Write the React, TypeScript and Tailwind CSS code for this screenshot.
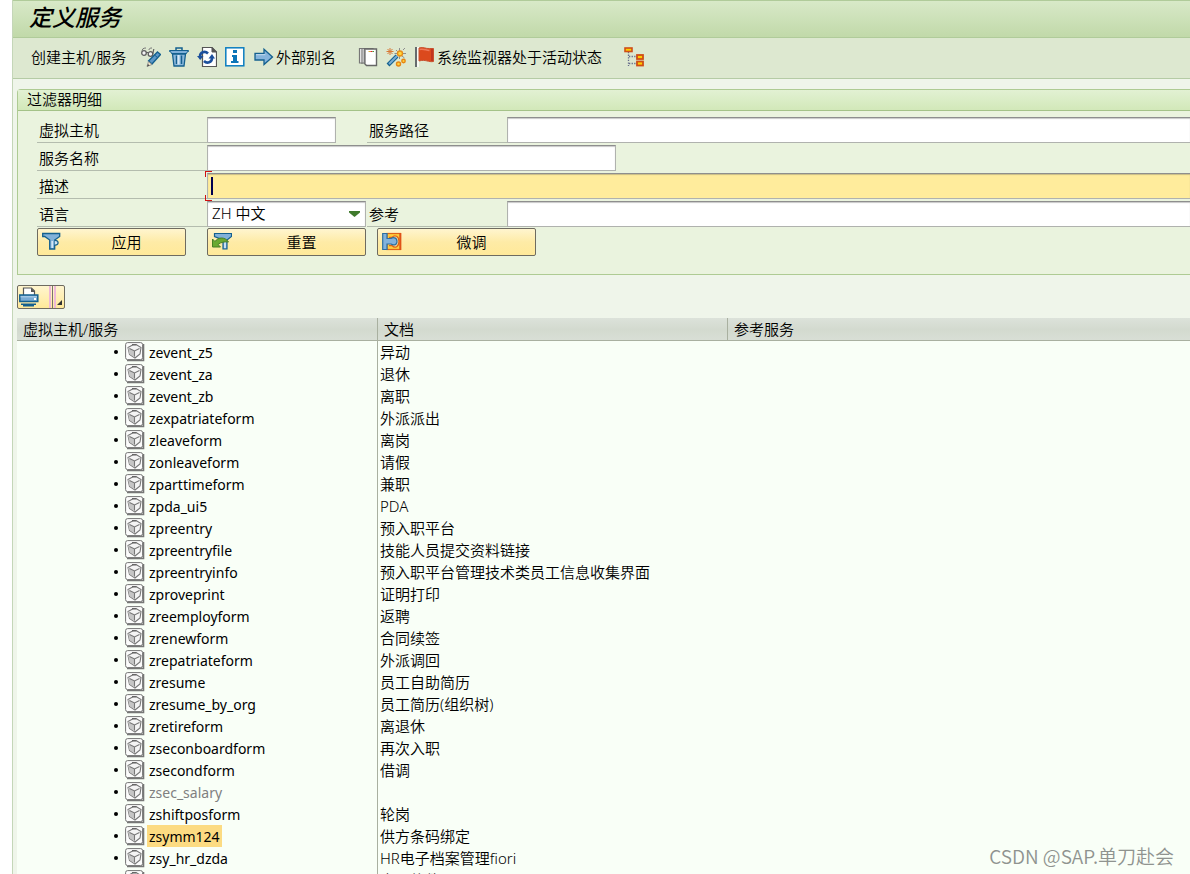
import type { ReactNode } from "react";

type Service = { name: string; doc: string; inactive?: boolean; selected?: boolean };

const services: Service[] = [
  { name: "zevent_z5", doc: "异动" },
  { name: "zevent_za", doc: "退休" },
  { name: "zevent_zb", doc: "离职" },
  { name: "zexpatriateform", doc: "外派派出" },
  { name: "zleaveform", doc: "离岗" },
  { name: "zonleaveform", doc: "请假" },
  { name: "zparttimeform", doc: "兼职" },
  { name: "zpda_ui5", doc: "PDA" },
  { name: "zpreentry", doc: "预入职平台" },
  { name: "zpreentryfile", doc: "技能人员提交资料链接" },
  { name: "zpreentryinfo", doc: "预入职平台管理技术类员工信息收集界面" },
  { name: "zproveprint", doc: "证明打印" },
  { name: "zreemployform", doc: "返聘" },
  { name: "zrenewform", doc: "合同续签" },
  { name: "zrepatriateform", doc: "外派调回" },
  { name: "zresume", doc: "员工自助简历" },
  { name: "zresume_by_org", doc: "员工简历(组织树)" },
  { name: "zretireform", doc: "离退休" },
  { name: "zseconboardform", doc: "再次入职" },
  { name: "zsecondform", doc: "借调" },
  { name: "zsec_salary", doc: "", inactive: true },
  { name: "zshiftposform", doc: "轮岗" },
  { name: "zsymm124", doc: "供方条码绑定", selected: true },
  { name: "zsy_hr_dzda", doc: "HR电子档案管理fiori" },
  { name: "zsy_hr_wx", doc: "志愿软件" },
];

function Icon({ children }: { children: ReactNode }) {
  return (
    <svg className="h-5 w-5 shrink-0" viewBox="0 0 20 20" fill="none" aria-hidden="true">
      {children}
    </svg>
  );
}

function GlassesPencilIcon() {
  return (
    <Icon>
      <path d="M1 5C1 2 2 1 5 1M8 3c0-1.500 1-2 3-2" stroke="#777" strokeWidth="1" />
      <circle cx="3" cy="6" r="2.300" fill="#f4f4f4" stroke="#5f5f5f" strokeWidth="1.300" />
      <circle cx="9.500" cy="7" r="2.300" fill="#f4f4f4" stroke="#5f5f5f" strokeWidth="1.300" />
      <path d="M5 5.500h2.500M11.800 7l1-5" stroke="#5f5f5f" strokeWidth="1.200" />
      <path d="M16.500 5l3 2.500L11 17l-3.500-3z" fill="#5d98c8" stroke="#14608f" strokeWidth="1.400" />
      <path d="M13.500 8l3.500 3" stroke="#14608f" />
      <path d="M7.500 14.500l3.500 3-5 2z" fill="#f0e4c8" stroke="#888" strokeWidth=".8" />
      <path d="M6 19.500l1-2.500 1.500 1.500z" fill="#444" />
    </Icon>
  );
}

function TrashIcon() {
  return (
    <Icon>
      <path d="M7 3V1h6v2" stroke="#14608f" strokeWidth="1.500" />
      <path d="M.5 3.500h19v1h-1l-1 2h-15l-1-2h-1z" fill="#7fb0d9" stroke="#14608f" />
      <path d="M3.500 7h13L15 19H5z" fill="#8cb8dc" stroke="#14608f" strokeWidth="1.300" />
      <path d="M7.500 8.500V17M12.500 8.500V17" stroke="#14608f" strokeWidth="1.500" />
      <path d="M9.500 8v9.500" stroke="#d5e7f5" strokeWidth="2" />
    </Icon>
  );
}

function RefreshPageIcon() {
  return (
    <Icon>
      <path d="M5.500.5H15l4.500 4.500v14.500h-14z" fill="#fff" stroke="#555" strokeWidth="1.200" />
      <path d="M15 .5V5h4.500z" fill="#555" stroke="#555" />
      <path d="M3 9.500C3 5 8 3.500 11 6.500" stroke="#1b4f9c" strokeWidth="2.600" />
      <path d="M0 9h6.500L3.200 13z" fill="#1b4f9c" />
      <path d="M15 11c0 4.500-5 6-8 3" stroke="#1b4f9c" strokeWidth="2.600" />
      <path d="M11.500 11.500H18L15 7z" fill="#1b4f9c" />
    </Icon>
  );
}

function InfoIcon() {
  return (
    <Icon>
      <rect x=".8" y=".8" width="18" height="18" fill="#fff" stroke="#0b7dc0" strokeWidth="1.500" />
      <path d="M8 3h4v3H8zM7 8h5v6h1.500v2H6v-2h2v-4H7z" fill="#0b75b8" />
    </Icon>
  );
}

function ArrowIcon() {
  return (
    <Icon>
      <path d="M1 6.500h9V2.200L18.500 10 10 17.500V13H1z" fill="#86b4dc" stroke="#14608f" strokeWidth="1.300" />
      <path d="M2 7.700h9.300" stroke="#c8dff2" />
    </Icon>
  );
}

function BooksIcon() {
  return (
    <Icon>
      <path d="M1.500 1.500H15V16h-13.500z" fill="#f0f0f0" stroke="#777" strokeWidth="1.200" />
      <path d="M4 2v15" stroke="#777" strokeWidth="1.200" />
      <path d="M6.500 2h12v16.500h-10l-2-2z" fill="#fff" stroke="#666" strokeWidth="1.400" />
      <path d="M6.700 2.500v14" stroke="#777" strokeWidth="1.800" />
      <path d="M10.500 4.500h2" stroke="#ddaa3c" />
      <path d="M12.500 4.500h2" stroke="#e02020" />
      <path d="M14.500 4.500h1.500" stroke="#44a038" />
    </Icon>
  );
}

function WandIcon() {
  return (
    <Icon>
      <path d="M4 1v7M.5 4.500h7M1.500 2l5 5M6.500 2l-5 5" stroke="#d87936" />
      <path d="M2 18L11 9" stroke="#14608f" strokeWidth="4" />
      <path d="M3 17L11 9" stroke="#78acd4" strokeWidth="2" />
      <path d="M13.500 1v3M13.500 9v3M8.500 6.500h3M16 6.500h4M17 3l2-2M10 3l1.500 1.500M16 9l2.500 2" stroke="#8d8d8d" />
      <circle cx="14" cy="6.500" r="2.500" fill="#ffd93c" stroke="#e88e19" strokeWidth="1.400" />
      <circle cx="17.500" cy="14" r="1.700" fill="#ffd23a" stroke="#e68613" strokeWidth="1.400" />
      <circle cx="12.500" cy="17" r="2" fill="#ffd23a" stroke="#e68613" strokeWidth="1.400" />
    </Icon>
  );
}

function FlagIcon() {
  return (
    <Icon>
      <path d="M2 0v20" stroke="#666b6d" strokeWidth="2" />
      <path d="M4 0v20" stroke="#fff" strokeWidth="1.500" />
      <path d="M5 1c5-1.500 6.500 1 10.500 .5H19.500v13c-5 1-8-2.500-14.500-.5z" fill="#db491d" stroke="#c8512f" />
      <path d="M5.500 2.500c5-1 6 1 10 1" stroke="#ee795a" strokeWidth="1.500" />
      <path d="M18 2v12" stroke="#b82e20" strokeWidth="1.500" />
    </Icon>
  );
}

function HierarchyIcon() {
  return (
    <Icon>
      <path d="M4.500 5v14M5 9.500h8M5 16.500h8" stroke="#666b8b" strokeWidth="1.300" strokeDasharray="1.300 1.300" />
      <rect x="1" y="1" width="7" height="3.500" fill="#ffcc00" stroke="#cf4e16" strokeWidth="1.600" />
      <rect x="13" y="8" width="6" height="4" fill="#ffcc00" stroke="#cf4e16" strokeWidth="1.800" />
      <rect x="13" y="14.500" width="6" height="4" fill="#ffcc00" stroke="#cf4e16" strokeWidth="1.800" />
    </Icon>
  );
}

function FilterIcon() {
  return (
    <Icon>
      <path d="M.7 1.500h17v3l-5 3.500v9h-5V8l-5-3.500h-2z" fill="#82b1d9" stroke="#14608f" strokeWidth="1.300" />
      <path d="M10.200 9v7" stroke="#d4e6f4" strokeWidth="1.600" />
      <path d="M12.700 8.500c4.500-.5 4.500 5 0 4.500" fill="#cfe3f2" stroke="#14608f" strokeWidth="1.300" />
    </Icon>
  );
}

function ResetFilterIcon() {
  return (
    <Icon>
      <path d="M2.500 1.500h17v3l-4.500 3.500v9h-4V8L2.500 4.500z" fill="#82b1d9" stroke="#14608f" strokeWidth="1.200" />
      <path d="M13 10v6" stroke="#e0eef8" strokeWidth="1.500" />
      <path d="M.5 7v8h8l-2.500-2.500C9 10 13 9.500 16.500 10 13 4.500 6 5 3 9.500z" fill="#6aaa31" stroke="#477f25" />
    </Icon>
  );
}

function FineTuneIcon() {
  return (
    <Icon>
      <rect x="5" y="1.500" width="13.500" height="16" fill="#ffce3e" stroke="#df6418" strokeWidth="1.200" />
      <path d="M18.300 1v17" stroke="#df5318" strokeWidth="2" />
      <path d="M7 5.500h3c3-3.500 7-1 7 4s-4 7.500-7 4H7" fill="#f6dfa3" stroke="#df6418" strokeWidth="1.300" />
      <path d="M.7 1.500H5v5h4c2-1.500 6-1 6 3s-4 4-6 2.500H5v5.500H.7z" fill="#83b2dc" stroke="#2d6fa0" strokeWidth="1.200" />
    </Icon>
  );
}

function PrinterIcon() {
  return (
    <Icon>
      <path d="M4.500 8V1H12.500L15.500 4v4" fill="#fff" stroke="#555" strokeWidth="1.200" />
      <path d="M12 1v4h4z" fill="#555" />
      <path d="M.8 8h18v6.500H.8z" fill="#79abd5" stroke="#14608f" strokeWidth="1.500" />
      <path d="M1.500 9.800h16.500" stroke="#b5d3eb" />
      <rect x="15" y="11" width="2" height="2" fill="#fff" />
      <path d="M2 16.500h15V18h-2v1.500H4V18H2z" fill="#14608f" />
    </Icon>
  );
}

function ServiceIcon() {
  return (
    <Icon>
      <path d="M2 18.500h16.500V2" stroke="#777" strokeWidth="1.600" />
      <rect x=".6" y=".6" width="17" height="17" rx="2" fill="#fcfcfc" stroke="#737373" />
      <path d="M3 5.500l5-2.800h3.500l4.500 2.800-1 6.500-5 4-5.500-3.500z" fill="#f4f4f4" stroke="#777" strokeWidth="1.100" />
      <path d="M3 5.500L9.500 9v6.500L4.500 12z" fill="#c6c6c6" />
      <path d="M4.500 6.500l5 2.500 5-2.500M9.500 9v5.500" stroke="#777" strokeWidth="1.100" />
      <path d="M7 2.700h4.500" stroke="#666" strokeWidth="1.400" />
    </Icon>
  );
}

const labelStyle = "flex h-[26px] items-center border-b border-[#b4bcae] pl-0.5";
const fieldStyle =
  "h-[26px] min-w-0 border border-[#b0b2ae] border-t-[#8e8e8e] bg-white px-1 shadow-[inset_0_1px_1px_#c8c8c8] outline-none";
const buttonStyle =
  "flex h-7 items-center rounded-xs border border-[#6e6b60] bg-linear-to-b from-[#fff5cf] via-[#feeba6] to-[#ffe999] pl-1";

function ActionButton({ icon, text, className }: { icon: ReactNode; text: string; className: string }) {
  return (
    <button type="button" className={`${buttonStyle} ${className}`}>
      {icon}
      <span className="flex-1 pl-1.5 text-center">{text}</span>
    </button>
  );
}

function Toolbar() {
  return (
    <div role="toolbar" className="flex h-[41px] items-center border-b border-[#b5cba5] bg-[#dde8d0] pb-0.5 pl-[18px]">
      <button type="button" className="w-[110px] text-left">创建主机/服务</button>
      <div className="flex gap-2">
        <button type="button" aria-label="显示/更改"><GlassesPencilIcon /></button>
        <button type="button" aria-label="删除"><TrashIcon /></button>
        <button type="button" aria-label="刷新"><RefreshPageIcon /></button>
        <button type="button" aria-label="信息"><InfoIcon /></button>
      </div>
      <button type="button" className="ml-[9px] flex items-center gap-0.5"><ArrowIcon />外部别名</button>
      <div className="ml-[22px] flex gap-2">
        <button type="button" aria-label="文档"><BooksIcon /></button>
        <button type="button" aria-label="向导"><WandIcon /></button>
        <button type="button" className="flex items-center gap-[3px]"><FlagIcon />系统监视器处于活动状态</button>
      </div>
      <button type="button" aria-label="层次结构" className="ml-[22px]"><HierarchyIcon /></button>
    </div>
  );
}

function FilterPanel() {
  return (
    <section className="ml-1 mt-[10px] rounded-tl-sm border-y border-l border-[#aecb93] bg-[#eaf3de] pb-[18px]">
      <h2 className="flex h-[21px] items-center border-b border-[#a4c288] bg-linear-to-b from-[#e2f1d3] to-[#d2e8b9] pb-0.5 pl-[9px]">
        过滤器明细
      </h2>
      <form className="pl-[19px] pt-1.5" onSubmit={(e) => e.preventDefault()}>
        <div className="flex flex-col gap-0.5">
          <div className="flex">
            <label htmlFor="host" className={`${labelStyle} w-[170px]`}>虚拟主机</label>
            <input id="host" className={`${fieldStyle} w-[129px]`} />
            <label htmlFor="path" className={`${labelStyle} ml-[31px] w-[140px]`}>服务路径</label>
            <input id="path" className={`${fieldStyle} flex-1 border-r-0`} />
          </div>
          <div className="flex">
            <label htmlFor="service" className={`${labelStyle} w-[170px]`}>服务名称</label>
            <input id="service" className={`${fieldStyle} w-[409px]`} />
          </div>
          <div className="flex">
            <label htmlFor="description" className={`${labelStyle} w-[170px]`}>描述</label>
            <div className="relative flex flex-1">
              <input
                id="description"
                className="h-[26px] min-w-0 flex-1 border border-r-0 border-[#b0b2ae] border-t-[#8e8e8e] bg-[#ffec9c] px-1 shadow-[inset_0_1px_1px_#c8bc88] outline-none"
              />
              <span className="absolute -left-0.5 -top-0.5 h-1.5 w-[7px] border-l border-t border-[#d01010]" />
              <span className="absolute -bottom-0.5 -left-0.5 h-1.5 w-[7px] border-b border-l border-[#d01010]" />
              <span className="absolute left-1 top-1 h-[18px] w-0.5 bg-[#000050]" />
            </div>
          </div>
          <div className="flex">
            <label htmlFor="language" className={`${labelStyle} w-[170px]`}>语言</label>
            <div className="relative flex w-[159px]">
              <select id="language" className={`${fieldStyle} flex-1 appearance-none pb-0.5`}>
                <option>ZH 中文</option>
              </select>
              <svg className="pointer-events-none absolute right-1.5 top-2.5 h-1.5 w-[11px]" viewBox="0 0 11 6" aria-hidden="true">
                <path d="M0 0h11v1.500L5.500 6 0 1.500z" fill="#3f7a2c" />
              </svg>
            </div>
            <label htmlFor="reference" className={`${labelStyle} ml-px w-[140px]`}>参考</label>
            <input id="reference" className={`${fieldStyle} flex-1 border-r-0`} />
          </div>
        </div>
        <div className="mt-px flex">
          <ActionButton icon={<FilterIcon />} text="应用" className="w-[149px]" />
          <ActionButton icon={<ResetFilterIcon />} text="重置" className="ml-[21px] w-[159px]" />
          <ActionButton icon={<FineTuneIcon />} text="微调" className="ml-[11px] w-[159px]" />
        </div>
      </form>
    </section>
  );
}

function ServiceTable() {
  return (
    <table className="w-full table-fixed border-separate border-spacing-0">
      <thead>
        <tr className="h-[23px] bg-linear-to-b from-[#dce2da] via-[#d3dacf] to-[#d9dfd6] text-left">
          <th className="w-[361px] border-b border-r border-[#a9b0a0] p-0 pl-1.5 font-[350]">虚拟主机/服务</th>
          <th className="w-[350px] border-b border-r border-[#a9b0a0] p-0 pl-1.5 font-[350]">文档</th>
          <th className="border-b border-[#a9b0a0] p-0 pl-1.5 font-[350]">参考服务</th>
        </tr>
      </thead>
      <tbody className="bg-[#f9fff7]">
        {services.map((s) => (
          <tr key={s.name} className="h-[22px]">
            <td className="border-r border-[#a9b0a0] p-0 pl-[97px]">
              <div className="flex h-[22px] items-center">
                <span className="mr-[7px] h-1 w-1 rounded-full bg-black" />
                <ServiceIcon />
                <span
                  className={`ml-0.5 flex h-[22px] items-center px-0.5 pt-0.5 text-sm font-normal ${s.selected ? "bg-[#fcdb82]" : ""} ${s.inactive ? "text-[#808080]" : ""}`}
                >
                  {s.name}
                </span>
              </div>
            </td>
            <td className="p-0 pl-0.5">{s.doc}</td>
            <td className="p-0" />
          </tr>
        ))}
      </tbody>
    </table>
  );
}

export default function App() {
  return (
    <div className="relative h-screen overflow-hidden bg-white pl-3 font-['Noto_Sans','Noto_Sans_CJK_SC',sans-serif] text-[15px] font-[350] leading-5 text-black">
      <main className="min-h-full border-l border-[#c4d6b8] bg-[#eff5ea]">
        <h1 className="flex h-[38px] items-center border-b border-t border-[#b0cb9a] bg-linear-to-b from-[#d8e9c8] to-[#c1d9a9] pb-1 pl-4 text-[23px] font-medium italic">
          定义服务
        </h1>
        <Toolbar />
        <FilterPanel />
        <button
          type="button"
          aria-label="打印"
          className="ml-1 mt-[10px] flex h-6 w-12 items-center rounded-xs border border-[#6e6b60] bg-linear-to-b from-[#fff5cf] to-[#ffe999] pl-px"
        >
          <PrinterIcon />
          <span className="ml-2.5 h-full w-[7px] border-x-2 border-[#eeb8d8] bg-[#77736c] bg-clip-content px-px" />
          <svg className="ml-px mt-2.5 h-[5px] w-[5px]" viewBox="0 0 5 5" aria-hidden="true">
            <path d="M5 0v5H0z" fill="#333" />
          </svg>
        </button>
        <div className="ml-1 mt-[9px]">
          <ServiceTable />
        </div>
      </main>
      <p className="absolute bottom-1.5 right-4 font-['Noto_Sans_CJK_SC',sans-serif] text-[19px] font-[350] leading-6 text-[#8f938f]">
        CSDN @SAP.单刀赴会
      </p>
    </div>
  );
}
